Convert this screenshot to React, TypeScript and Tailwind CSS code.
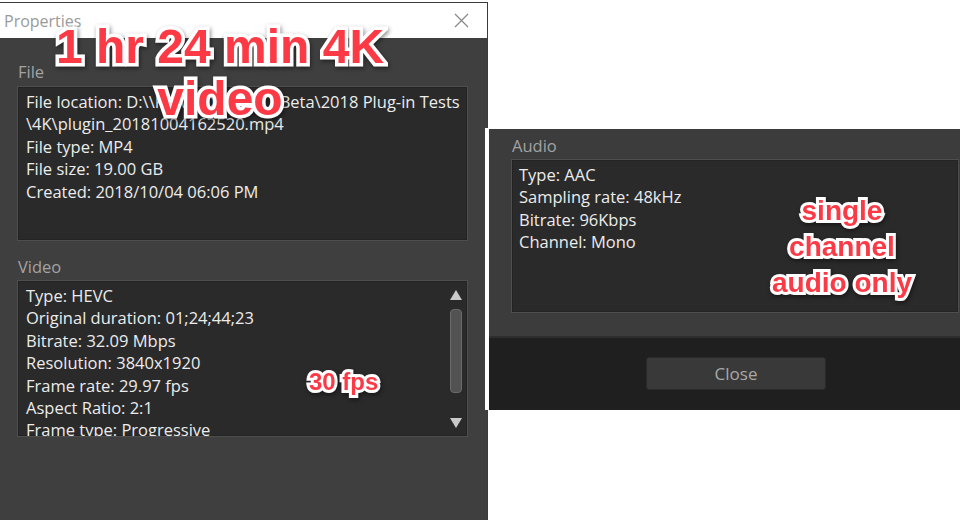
import React from "react";

const ui = "font-['Open_Sans','Noto_Sans',sans-serif]";
const anno =
  "absolute font-['Liberation_Sans',Arial,sans-serif] font-bold text-[#fb3a46] text-center [paint-order:stroke_fill] [filter:drop-shadow(1px_2px_2px_rgba(0,0,0,0.45))]";

function Up() {
  return (
    <svg width="12" height="10" viewBox="0 0 12 10">
      <path d="M6 0 L12 10 L0 10 Z" fill="#c9c9c9" />
    </svg>
  );
}
function Down() {
  return (
    <svg width="12" height="10" viewBox="0 0 12 10">
      <path d="M0 0 L12 0 L6 10 Z" fill="#c9c9c9" />
    </svg>
  );
}

export default function App() {
  return (
    <div className={`relative w-[960px] h-[520px] bg-white overflow-hidden ${ui}`}>
      {/* Left Properties window */}
      <div className="flex flex-col w-[488px] h-[520px] mt-[2px] border-t border-r border-[#3b3b3b]">
        <div className="h-[35px] bg-white flex items-center justify-between pl-[4px] pr-[18px] shrink-0">
          <span className="text-[16px] text-[#9a9a9a]">Properties</span>
          <svg width="15" height="15" viewBox="0 0 15 15">
            <path d="M1 1 L14 14 M14 1 L1 14" stroke="#8a8a8a" strokeWidth="1.3" />
          </svg>
        </div>
        <div className="flex-1 bg-[#3f3f3f] pl-[17px] pr-[19px] pt-[23px] flex flex-col">
          <div className="text-[16.5px] leading-[22px] text-[#a3a3a3] pl-[1px]">File</div>
          <div className="mt-[3px] h-[155px] bg-[#2a2a2a] border border-[#4e4e4e] shadow-[inset_0_0_0_1px_#232323] pl-[8px] pt-[4px] text-[16.5px] font-medium leading-[22.4px] text-[#ececec] overflow-hidden">
            <div className="whitespace-nowrap">File location: D:\\PowerDirector7 Beta\2018 Plug-in Tests</div>
            <div className="whitespace-nowrap">\4K\plugin_20181004162520.mp4</div>
            <div>File type: MP4</div>
            <div>File size: 19.00 GB</div>
            <div>Created: 2018/10/04 06:06 PM</div>
          </div>
          <div className="mt-[15px] text-[16.5px] leading-[22px] text-[#a3a3a3] pl-[1px]">Video</div>
          <div className="mt-[2px] h-[157px] bg-[#2a2a2a] border border-[#4e4e4e] shadow-[inset_0_0_0_1px_#232323] flex overflow-hidden">
            <div className="flex-1 pl-[8px] pt-[4px] text-[16.5px] font-medium leading-[22.4px] text-[#ececec] overflow-hidden">
              <div>Type: HEVC</div>
              <div>Original duration: 01;24;44;23</div>
              <div>Bitrate: 32.09 Mbps</div>
              <div>Resolution: 3840x1920</div>
              <div>Frame rate: 29.97 fps</div>
              <div>Aspect Ratio: 2:1</div>
              <div className="whitespace-nowrap">Frame type: Progressive</div>
            </div>
            <div className="w-[19px] mr-[2px] flex flex-col items-center pt-[9px]">
              <Up />
              <div className="mt-[9px] w-[12px] h-[84px] rounded-[4px] bg-[#525252] border border-[#6a6a6a]" />
              <div className="mt-[25px]">
                <Down />
              </div>
            </div>
          </div>
        </div>
      </div>

      {/* Right Audio window (overlay) */}
      <div className="absolute left-[485px] top-[128px] w-[475px] h-[282px] bg-white pl-[4px] pt-[1px]">
        <div className="h-full flex flex-col bg-[#3c3c3c]">
          <div className="flex-1 flex flex-col pl-[22px] pr-[1px] pt-[6px] border-b-2 border-[#2e2e2e]">
            <div className="text-[16.5px] leading-[22px] text-[#a3a3a3] pl-[1px]">Audio</div>
            <div className="mt-[2px] h-[154px] bg-[#2a2a2a] border border-[#4e4e4e] shadow-[inset_0_0_0_1px_#232323] pl-[7px] pt-[4px] text-[16.5px] font-medium leading-[22.4px] text-[#ececec]">
              <div>Type: AAC</div>
              <div>Sampling rate: 48kHz</div>
              <div>Bitrate: 96Kbps</div>
              <div>Channel: Mono</div>
            </div>
          </div>
          <div className="h-[72px] bg-[#1f1f1f] pt-[19px] pl-[157px]">
            <div className="w-[180px] h-[33px] bg-[#393939] border border-[#2a2a2a] rounded-[3px] flex items-center justify-center text-[17px] text-[#a8a8a8]">
              Close
            </div>
          </div>
        </div>
      </div>

      {/* Annotations */}
      <div className={`${anno} left-[20px] top-[21px] w-[400px] text-[48px] leading-[52px] [-webkit-text-stroke:7px_#fff]`}>
        1 hr 24 min 4K
        <br />
        video
      </div>
      <div className={`${anno} left-[309px] top-[368px] text-[24px] leading-[28px] [-webkit-text-stroke:6px_#fff]`}>
        30 fps
      </div>
      <div className={`${anno} left-[740px] top-[193px] w-[204px] text-[28px] leading-[36px] [-webkit-text-stroke:6px_#fff]`}>
        single
        <br />
        channel
        <br />
        audio only
      </div>
    </div>
  );
}
